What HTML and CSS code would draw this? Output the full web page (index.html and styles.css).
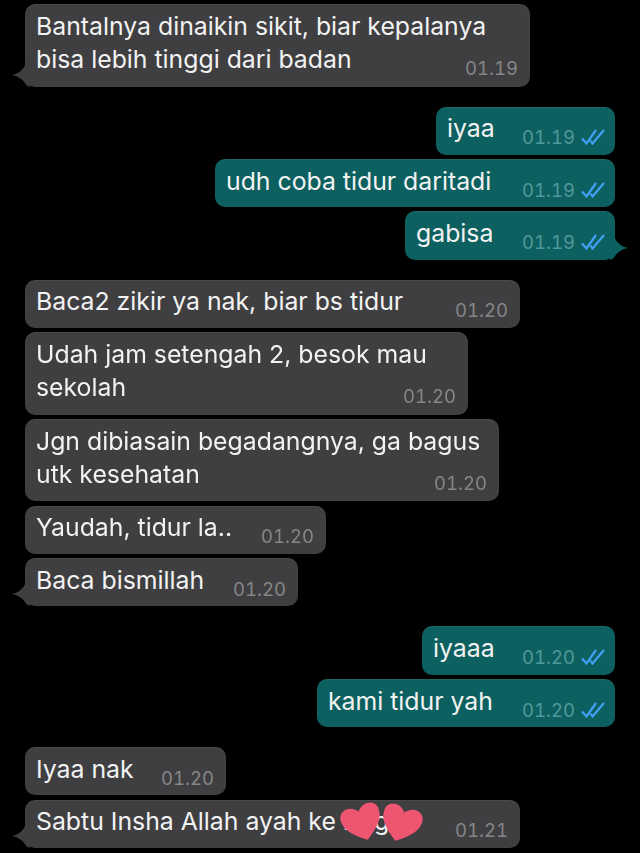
FILE: index.html
```html
<!DOCTYPE html>
<html lang="id">
<head>
<meta charset="utf-8">
<title>Chat</title>
<link rel="stylesheet" href="styles.css">
</head>
<body>
<main class="chat">
  <section class="group in">
    <div class="bubble multi w505"><p>Bantalnya dinaikin sikit, biar kepalanya<br>bisa lebih tinggi dari badan</p><span class="meta"><time>01.19</time></span>
      <svg class="tail" viewBox="0 0 16 34"><path d="M16 0C15.500 12 10 20 0 22C6 23 10 26 13 30C14 32 15 33 18 34Z"/></svg></div>
  </section>
  <section class="group out">
    <div class="bubble w179"><p>iyaa</p><span class="meta"><time>01.19</time><svg class="ticks" viewBox="0 0 24 16"><path d="M1 9.500L5.500 14.500L15 1M9.500 11.500L11.500 14.500L23 1"/></svg></span></div>
    <div class="bubble w400"><p>udh coba tidur daritadi</p><span class="meta"><time>01.19</time><svg class="ticks" viewBox="0 0 24 16"><path d="M1 9.500L5.500 14.500L15 1M9.500 11.500L11.500 14.500L23 1"/></svg></span></div>
    <div class="bubble w210"><p>gabisa</p><span class="meta"><time>01.19</time><svg class="ticks" viewBox="0 0 24 16"><path d="M1 9.500L5.500 14.500L15 1M9.500 11.500L11.500 14.500L23 1"/></svg></span>
      <svg class="tail" viewBox="0 0 16 34"><path d="M0 0C.5 12 6 20 16 22C10 23 6 26 3 30C2 32 1 33 -2 34Z"/></svg></div>
  </section>
  <section class="group in">
    <div class="bubble w495"><p>Baca2 zikir ya nak, biar bs tidur</p><span class="meta"><time>01.20</time></span></div>
    <div class="bubble multi w443"><p>Udah jam setengah 2, besok mau<br>sekolah</p><span class="meta"><time>01.20</time></span></div>
    <div class="bubble multi w474"><p>Jgn dibiasain begadangnya, ga bagus<br>utk kesehatan</p><span class="meta"><time>01.20</time></span></div>
    <div class="bubble w301"><p>Yaudah, tidur la..</p><span class="meta"><time>01.20</time></span></div>
    <div class="bubble w273"><p>Baca bismillah</p><span class="meta"><time>01.20</time></span>
      <svg class="tail" viewBox="0 0 16 34"><path d="M16 0C15.500 12 10 20 0 22C6 23 10 26 13 30C14 32 15 33 18 34Z"/></svg></div>
  </section>
  <section class="group out">
    <div class="bubble w193"><p>iyaaa</p><span class="meta"><time>01.20</time><svg class="ticks" viewBox="0 0 24 16"><path d="M1 9.500L5.500 14.500L15 1M9.500 11.500L11.500 14.500L23 1"/></svg></span></div>
    <div class="bubble w298"><p>kami tidur yah</p><span class="meta"><time>01.20</time><svg class="ticks" viewBox="0 0 24 16"><path d="M1 9.500L5.500 14.500L15 1M9.500 11.500L11.500 14.500L23 1"/></svg></span></div>
  </section>
  <section class="group in">
    <div class="bubble w201"><p>Iyaa nak</p><span class="meta"><time>01.20</time></span></div>
    <div class="bubble w495"><p>Sabtu Insha Allah ayah ke Bogor</p><span class="meta"><time>01.21</time></span>
      <svg class="tail" viewBox="0 0 16 34"><path d="M16 0C15.500 12 10 20 0 22C6 23 10 26 13 30C14 32 15 33 18 34Z"/></svg>
      <svg class="heart heart-a" viewBox="0 0 40 40"><path d="M20 37C7 28 1 21 2 12C3 4 14 2 20 10C26 2 37 4 38 12C39 21 33 28 20 37Z"/></svg>
      <svg class="heart heart-b" viewBox="0 0 40 40"><path d="M20 37C7 28 1 21 2 12C3 4 14 2 20 10C26 2 37 4 38 12C39 21 33 28 20 37Z"/></svg>
    </div>
  </section>
</main>
</body>
</html>
```
FILE: styles.css
```css
* { box-sizing: border-box; }
html, body { margin: 0; background: #000; }
body { height: 853px; overflow: hidden; font-family: Inter, "Liberation Sans", sans-serif; }
.chat { display: flex; flex-direction: column; gap: 20px; padding: 4px 25px 0; filter: blur(.3px); }
.group { display: flex; flex-direction: column; gap: 4.200px; }
.in { align-items: flex-start; }
.out { align-items: flex-end; }
.bubble {
  position: relative; display: flex; justify-content: space-between; align-items: flex-start;
  height: 48.300px; padding: 5.700px 12px 0 11px; border-radius: 10px;
  box-shadow: inset 0 1px 0 rgba(255,255,255,.06);
}
.in .bubble { background: #3f3f41; fill: #3f3f41; }
.out .bubble { background: #0c6060; fill: #0c6060; padding-right: 10px; }
.multi { flex-direction: column; justify-content: flex-start; height: 82.500px; }
.w179 { width: 179px; }
.w193 { width: 193px; }
.w201 { width: 201px; }
.w210 { width: 210px; }
.w273 { width: 273px; }
.w298 { width: 298px; }
.w301 { width: 301px; }
.w400 { width: 400px; }
.w443 { width: 443px; }
.w474 { width: 474px; }
.w495 { width: 495px; }
.w505 { width: 505px; }
p { margin: 0; font-size: 24.800px; line-height: 33px; color: #f2f2f2; white-space: nowrap; }
.meta { display: flex; align-items: center; gap: 6px; height: 24px; margin-top: 13px; font-size: 18.500px; letter-spacing: 0; font-variant-numeric: tabular-nums; }
.multi .meta { align-self: flex-end; margin-top: -20px; }
.in time { color: #868688; }
.out time { color: #52989a; }
.ticks { width: 24px; height: 16px; fill: none; stroke: #42a0f5; stroke-width: 2.200; }
.tail { position: absolute; bottom: 0; width: 16px; height: 34px; overflow: visible; }
.in .tail { left: -13px; }
.out .tail { right: -13px; }
.heart { position: absolute; width: 44px; height: 44px; fill: #ee5570; }
.heart-a { left: 315px; top: 0; transform: rotate(-18deg); }
.heart-b { left: 354px; top: 1px; transform: rotate(18deg); }
```
